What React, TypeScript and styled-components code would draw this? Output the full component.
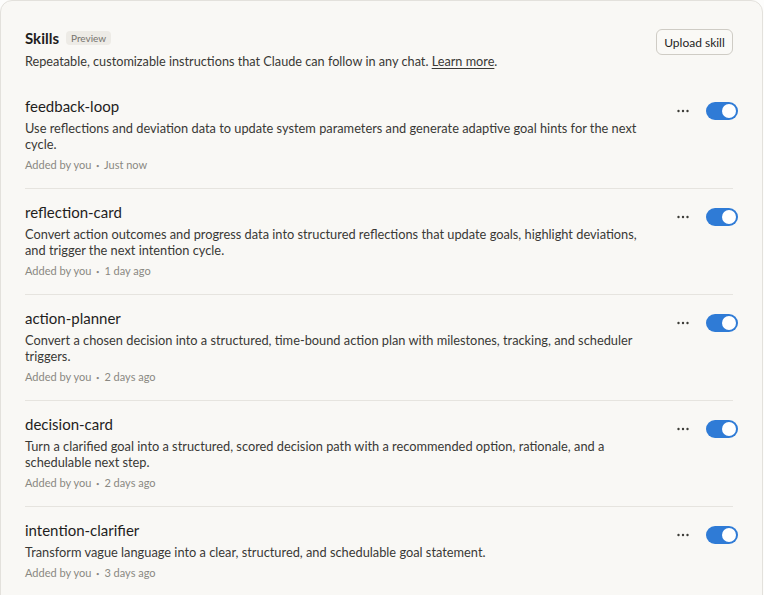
import styled, { createGlobalStyle } from 'styled-components';

type Skill = {
  name: string;
  description: string;
  added: string;
};

const skills: Array<Skill> = [
  {
    name: 'feedback-loop',
    description:
      'Use reflections and deviation data to update system parameters and generate adaptive goal hints for the next cycle.',
    added: 'Just now',
  },
  {
    name: 'reflection-card',
    description:
      'Convert action outcomes and progress data into structured reflections that update goals, highlight deviations, and trigger the next intention cycle.',
    added: '1 day ago',
  },
  {
    name: 'action-planner',
    description:
      'Convert a chosen decision into a structured, time-bound action plan with milestones, tracking, and scheduler triggers.',
    added: '2 days ago',
  },
  {
    name: 'decision-card',
    description:
      'Turn a clarified goal into a structured, scored decision path with a recommended option, rationale, and a schedulable next step.',
    added: '2 days ago',
  },
  {
    name: 'intention-clarifier',
    description: 'Transform vague language into a clear, structured, and schedulable goal statement.',
    added: '3 days ago',
  },
];

const App = () => (
  <>
    <GlobalStyle />
    <Panel>
      <Header>
        <div>
          <TitleRow>
            <Title>Skills</Title>
            <Badge>Preview</Badge>
          </TitleRow>
          <Subtitle>
            Repeatable, customizable instructions that Claude can follow in any chat.{' '}
            <LearnMore href="#">Learn more</LearnMore>.
          </Subtitle>
        </div>
        <UploadButton type="button">Upload skill</UploadButton>
      </Header>

      <SkillList>
        {skills.map((skill) => (
          <SkillRow key={skill.name}>
            <SkillInfo>
              <SkillName>{skill.name}</SkillName>
              <SkillDescription>{skill.description}</SkillDescription>
              <SkillMeta>
                Added by you <MetaDot>•</MetaDot> {skill.added}
              </SkillMeta>
            </SkillInfo>
            <Controls>
              <MoreButton type="button" aria-label="More options">
                <svg width="12" height="4" viewBox="0 0 12 4">
                  <circle cx="1.5" cy="2" r="1.2" fill="#3d3c38" />
                  <circle cx="6" cy="2" r="1.2" fill="#3d3c38" />
                  <circle cx="10.5" cy="2" r="1.2" fill="#3d3c38" />
                </svg>
              </MoreButton>
              <Toggle $on>
                <Knob $on />
              </Toggle>
            </Controls>
          </SkillRow>
        ))}
      </SkillList>
    </Panel>
  </>
);

const GlobalStyle = createGlobalStyle`
  body {
    margin: 0;
    background: #fdfdfc;
    font-family: Lato, "Liberation Sans", sans-serif;
    color: #1f1e1d;
  }
`;

const Panel = styled.div`
  box-sizing: border-box;
  width: 763px;
  min-height: 640px;
  background: #f9f8f5;
  border: 1px solid #e3e1dc;
  border-radius: 12px 12px 0 0;
  padding: 27px 29px 0 24px;
`;

const Header = styled.div`
  display: flex;
  justify-content: space-between;
  align-items: flex-start;
`;

const TitleRow = styled.div`
  display: flex;
  align-items: center;
  gap: 7px;
  height: 20px;
`;

const Title = styled.h1`
  margin: 0;
  font-size: 15px;
  font-weight: 700;
  color: #1f1e1d;
`;

const Badge = styled.span`
  font-size: 10px;
  line-height: 14px;
  padding: 0 5px;
  border-radius: 4px;
  background: #edebe6;
  color: #75736d;
`;

const Subtitle = styled.p`
  margin: 4px 0 0;
  height: 18px;
  font-size: 12.7px;
  line-height: 18px;
  color: #3a3935;
`;

const LearnMore = styled.a`
  color: #3a3935;
  text-decoration: underline;
  text-underline-offset: 2px;
`;

const UploadButton = styled.button`
  margin-top: 1px;
  height: 26px;
  width: 77px;
  font-family: inherit;
  font-size: 12px;
  color: #1f1e1d;
  background: #faf9f6;
  border: 1px solid #cfccc5;
  border-radius: 6px;
  padding: 0;
`;

const SkillList = styled.div`
  margin-top: 13px;
`;

const SkillRow = styled.div`
  display: flex;
  align-items: flex-start;
  padding: 12px 0 14px;
  border-bottom: 1px solid #e6e4df;
`;

const SkillInfo = styled.div`
  flex: 1;
  max-width: 625px;
`;

const SkillName = styled.div`
  font-size: 15px;
  line-height: 22px;
  color: #1f1e1d;
`;

const SkillDescription = styled.div`
  margin-top: 3px;
  font-size: 12.8px;
  line-height: 16px;
  color: #3a3935;
`;

const SkillMeta = styled.div`
  margin-top: 5px;
  font-size: 11px;
  line-height: 16px;
  color: #8a8882;
`;

const MetaDot = styled.span`
  font-size: 6px;
  margin: 0 2px;
  vertical-align: 1px;
`;

const Controls = styled.div`
  display: flex;
  align-items: center;
  gap: 16px;
  margin-left: auto;
  margin-top: 7px;
  margin-right: -5px;
`;

const MoreButton = styled.button`
  display: flex;
  align-items: center;
  justify-content: center;
  width: 14px;
  height: 18px;
  padding: 0;
  border: none;
  background: transparent;
`;

const Toggle = styled.div<{ $on: boolean }>`
  position: relative;
  width: 32px;
  height: 18px;
  border-radius: 9px;
  background: ${({ $on }) => ($on ? '#2f7bd6' : '#cfccc5')};
`;

const Knob = styled.span<{ $on: boolean }>`
  position: absolute;
  top: 2px;
  left: ${({ $on }) => ($on ? '16px' : '2px')};
  width: 14px;
  height: 14px;
  border-radius: 50%;
  background: #fff;
`;

export default App;
